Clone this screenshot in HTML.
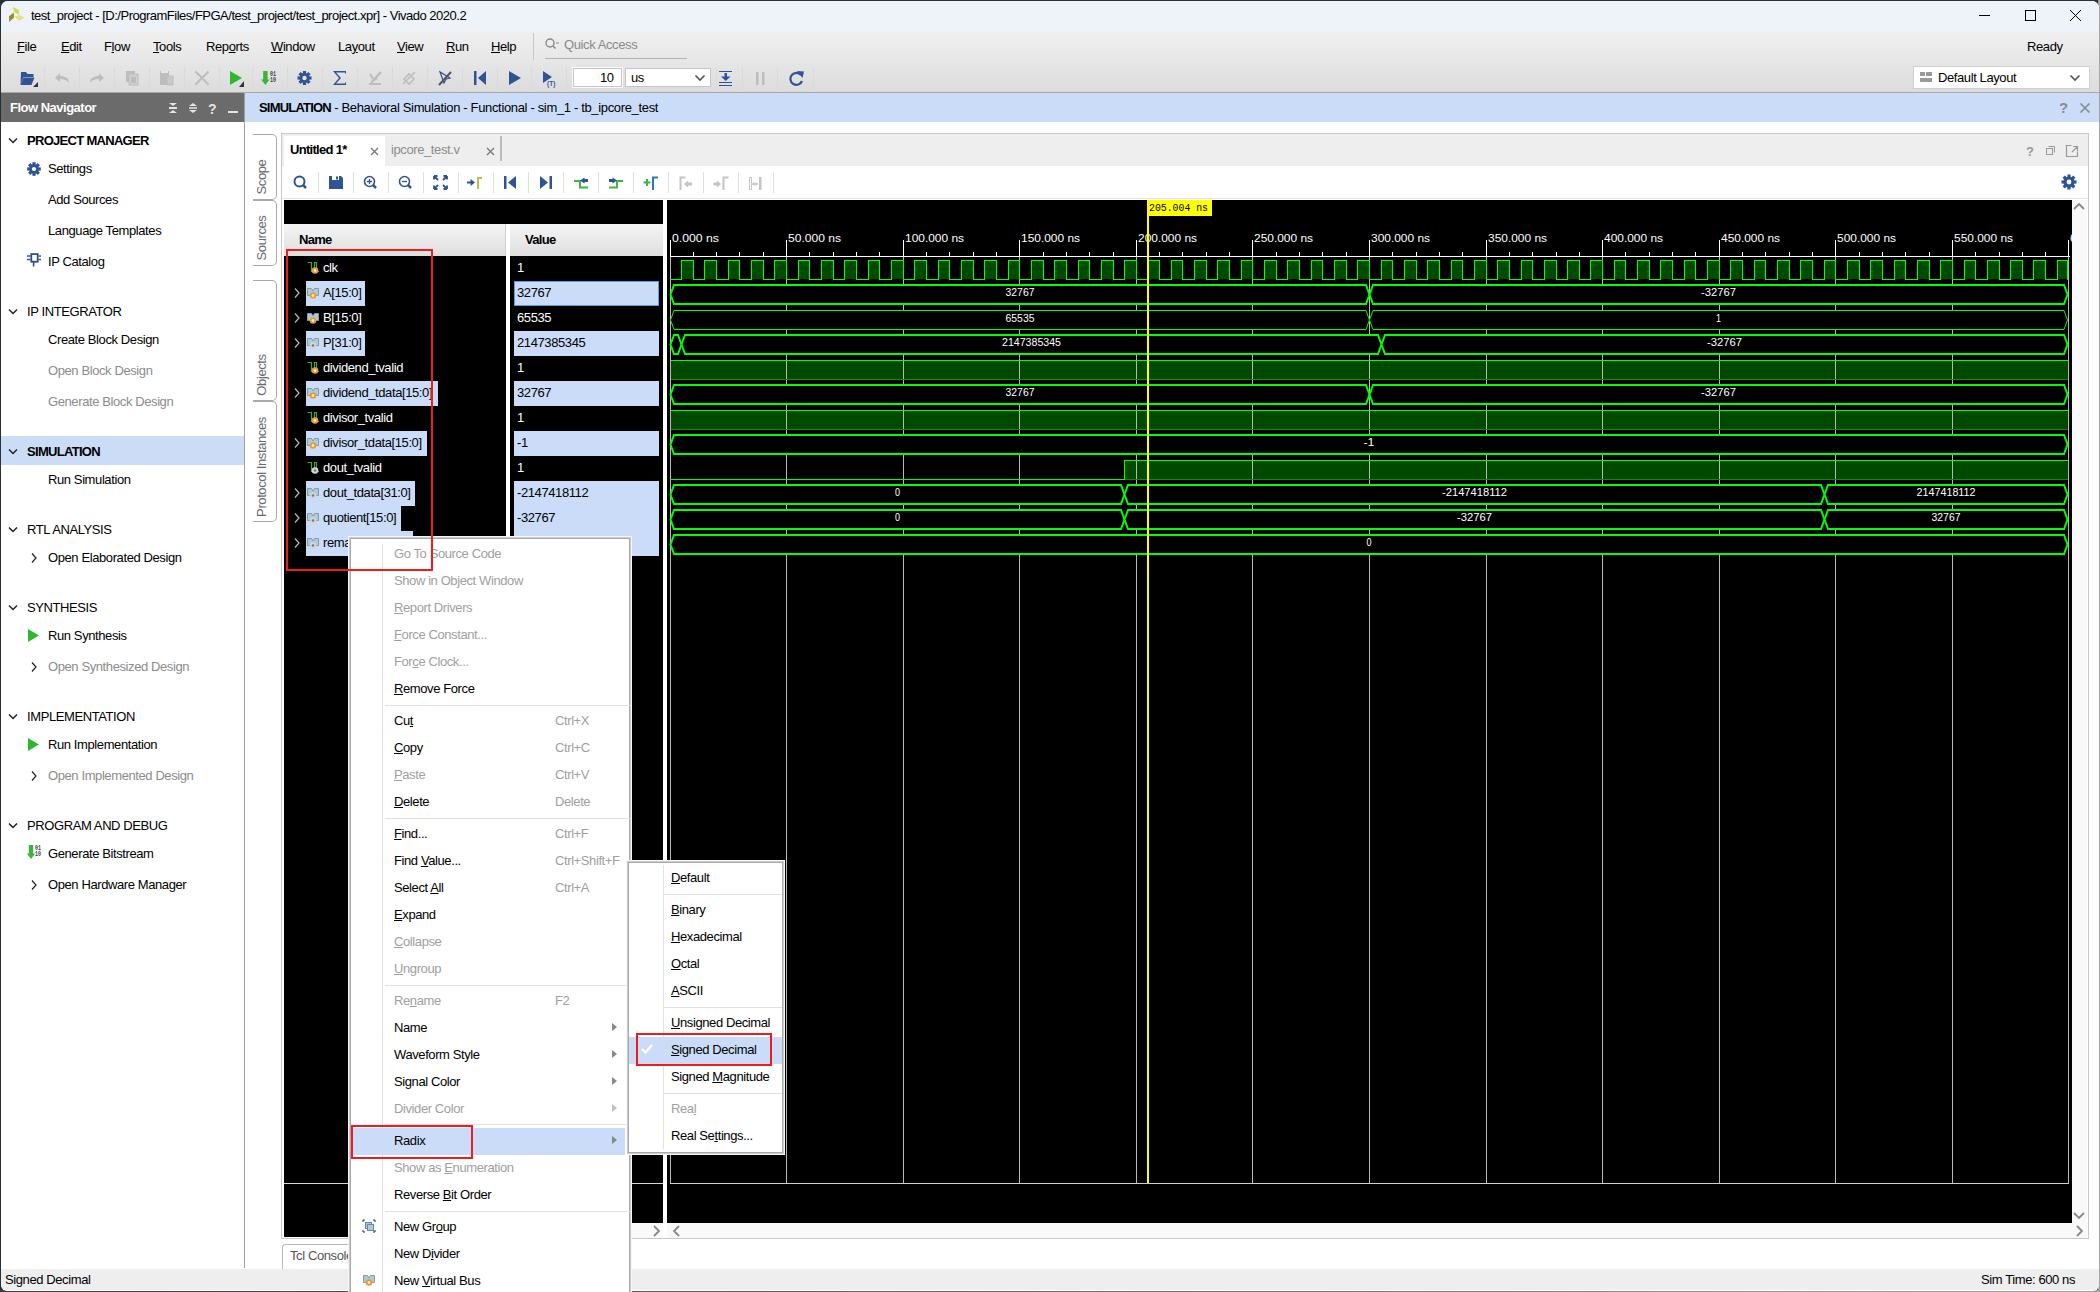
<!DOCTYPE html><html><head><meta charset="utf-8"><style>
*{margin:0;padding:0;box-sizing:border-box}
html,body{width:2100px;height:1292px;overflow:hidden;background:#2b3036;font-family:"Liberation Sans",sans-serif}
.t{position:absolute;white-space:nowrap;line-height:20px;letter-spacing:-0.4px;font-family:"Liberation Sans",sans-serif}
.r{position:absolute}
.s{position:absolute;overflow:visible}
u{text-decoration:underline;text-underline-offset:1px;text-decoration-thickness:1px}
b{letter-spacing:-0.8px}
.mono{font-family:"Liberation Mono",monospace}
</style></head><body>
<div class="r" style="left:2098px;top:0px;width:2px;height:1292px;background:#a4a4a4;"></div>
<div class="r" style="left:0px;top:1290px;width:2100px;height:2px;background:linear-gradient(90deg,#3a3f45,#6a6a6a 50%,#a4a4a4);"></div>
<div class="r" style="left:1px;top:1px;width:2098px;height:1290px;background:#ffffff;border-radius:7px 7px 6px 6px;overflow:hidden"></div>
<div class="r" style="left:1px;top:1px;width:2098px;height:30px;background:#eef2f9;border-radius:7px 7px 0 0"></div>
<div class="r" style="left:1px;top:31px;width:2098px;height:62px;background:linear-gradient(#f0f0f0,#dcdcdc);"></div>
<div class="r" style="left:1px;top:92px;width:2098px;height:1px;background:#a8a8a8;"></div>
<svg class="s" style="left:0;top:0" width="30" height="30"><polygon points="9,16.2 13.8,12.4 14,17.6 9.3,22" fill="#8f9418"/><polygon points="13,7 18.8,10 19,14.5 14,12" fill="#d6d84a"/><polygon points="14.3,17 19,15 24.5,17.6 19.5,20.7" fill="#e2e47a"/></svg>
<div class="t " style="left:31px;top:6px;font-size:13px;color:#000;font-weight:normal;letter-spacing:-0.5px">test_project - [D:/ProgramFiles/FPGA/test_project/test_project.xpr] - Vivado 2020.2</div>
<svg class="s" style="left:1975px;top:6px" width="110" height="20"><line x1="4" y1="9.5" x2="15" y2="9.5" stroke="#000" stroke-width="1"/><rect x="50.5" y="4.5" width="10" height="10" fill="none" stroke="#000" stroke-width="1"/><path d="M95,4 L106,15 M106,4 L95,15" stroke="#000" stroke-width="1"/></svg>
<div class="t " style="left:17px;top:37px;font-size:13px;color:#000;font-weight:normal;"><u>F</u>ile</div>
<div class="t " style="left:61px;top:37px;font-size:13px;color:#000;font-weight:normal;"><u>E</u>dit</div>
<div class="t " style="left:104px;top:37px;font-size:13px;color:#000;font-weight:normal;">F<u>l</u>ow</div>
<div class="t " style="left:153px;top:37px;font-size:13px;color:#000;font-weight:normal;"><u>T</u>ools</div>
<div class="t " style="left:206px;top:37px;font-size:13px;color:#000;font-weight:normal;">Rep<u>o</u>rts</div>
<div class="t " style="left:271px;top:37px;font-size:13px;color:#000;font-weight:normal;"><u>W</u>indow</div>
<div class="t " style="left:338px;top:37px;font-size:13px;color:#000;font-weight:normal;">La<u>y</u>out</div>
<div class="t " style="left:397px;top:37px;font-size:13px;color:#000;font-weight:normal;"><u>V</u>iew</div>
<div class="t " style="left:446px;top:37px;font-size:13px;color:#000;font-weight:normal;"><u>R</u>un</div>
<div class="t " style="left:491px;top:37px;font-size:13px;color:#000;font-weight:normal;"><u>H</u>elp</div>
<div class="r" style="left:533px;top:33px;width:1px;height:27px;background:#c8c8c8;"></div>
<svg class="s" style="left:544px;top:37px" width="18" height="14"><circle cx="6" cy="6" r="4" fill="none" stroke="#8a8a8a" stroke-width="1.4"/><line x1="9" y1="9" x2="11.5" y2="11.5" stroke="#8a8a8a" stroke-width="1.6"/><line x1="12" y1="6" x2="15" y2="6" stroke="#8a8a8a" stroke-width="1"/></svg>
<div class="t " style="left:564px;top:35px;font-size:13px;color:#8a8a8a;font-weight:normal;">Quick Access</div>
<div class="r" style="left:545px;top:58px;width:142px;height:1px;background:#b4b4b4;"></div>
<div class="t " style="left:2027px;top:37px;font-size:13px;color:#000;font-weight:normal;">Ready</div>
<svg class="s" style="left:0;top:62px" width="900" height="31" viewBox="0 62 900 31"><line x1="44.5" y1="67" x2="44.5" y2="89" stroke="#dadada" stroke-width="1"/><line x1="79.5" y1="67" x2="79.5" y2="89" stroke="#dadada" stroke-width="1"/><line x1="114.5" y1="67" x2="114.5" y2="89" stroke="#dadada" stroke-width="1"/><line x1="149.5" y1="67" x2="149.5" y2="89" stroke="#dadada" stroke-width="1"/><line x1="184.5" y1="67" x2="184.5" y2="89" stroke="#dadada" stroke-width="1"/><line x1="219.5" y1="67" x2="219.5" y2="89" stroke="#dadada" stroke-width="1"/><line x1="252.5" y1="67" x2="252.5" y2="89" stroke="#dadada" stroke-width="1"/><line x1="287.5" y1="67" x2="287.5" y2="89" stroke="#dadada" stroke-width="1"/><line x1="322.5" y1="67" x2="322.5" y2="89" stroke="#dadada" stroke-width="1"/><line x1="357.5" y1="67" x2="357.5" y2="89" stroke="#dadada" stroke-width="1"/><line x1="392.5" y1="67" x2="392.5" y2="89" stroke="#dadada" stroke-width="1"/><line x1="427.5" y1="67" x2="427.5" y2="89" stroke="#dadada" stroke-width="1"/><line x1="462.5" y1="67" x2="462.5" y2="89" stroke="#dadada" stroke-width="1"/><line x1="497.5" y1="67" x2="497.5" y2="89" stroke="#dadada" stroke-width="1"/><line x1="531.5" y1="67" x2="531.5" y2="89" stroke="#dadada" stroke-width="1"/><line x1="566.5" y1="67" x2="566.5" y2="89" stroke="#dadada" stroke-width="1"/><line x1="716.5" y1="67" x2="716.5" y2="89" stroke="#dadada" stroke-width="1"/><line x1="742.5" y1="67" x2="742.5" y2="89" stroke="#dadada" stroke-width="1"/><line x1="777.5" y1="67" x2="777.5" y2="89" stroke="#dadada" stroke-width="1"/><line x1="813.5" y1="67" x2="813.5" y2="89" stroke="#dadada" stroke-width="1"/><path d="M21,72 h5 l1.5,2 h6 v3 h-10 l-3,8 z" fill="#2f5496"/><path d="M23.5,77.5 h11 l-3,7.5 h-11 z" fill="#2f5496"/><polygon points="38,82 38,87 33,87" fill="#333"/><path d="M55,78 l5,-5 v3 c5,0 9,2 9,7 c-2,-3 -5,-4 -9,-4 v3 z" fill="#bdbdbd"/><path d="M104,78 l-5,-5 v3 c-5,0 -9,2 -9,7 c2,-3 5,-4 9,-4 v3 z" fill="#bdbdbd"/><rect x="126" y="71" width="9" height="11" fill="#bdbdbd"/><rect x="129" y="74" width="9" height="11" fill="#cfcfcf" stroke="#bdbdbd" stroke-width="1"/><path d="M131,78h5M131,80h5M131,82h5" stroke="#aaa" stroke-width="1"/><rect x="160" y="71" width="9" height="14" fill="#bdbdbd"/><rect x="161" y="71" width="7" height="2" fill="#e8e8e8"/><rect x="167" y="76" width="6" height="9" fill="#c9c9c9" stroke="#bdbdbd"/><path d="M195.5,71.5 L208.5,84.5 M208.5,71.5 L195.5,84.5" stroke="#bdbdbd" stroke-width="2"/><polygon points="230,71 230,85 242,78" fill="#2eb82e"/><polygon points="244,81 244,87 239,87" fill="#333"/><rect x="263.2" y="71" width="4.4" height="9" fill="#3cb33c"/><polygon points="261.2,79.5 269.6,79.5 265.4,85" fill="#3cb33c"/><text x="270" y="76.3" font-size="7" font-weight="bold" font-family="Liberation Mono" fill="#444" textLength="6" lengthAdjust="spacingAndGlyphs">01</text><text x="270" y="82.3" font-size="7" font-weight="bold" font-family="Liberation Mono" fill="#444" textLength="6" lengthAdjust="spacingAndGlyphs">10</text><rect x="302.9" y="71.0" width="3.2" height="4" fill="#2f5496" transform="rotate(0 304.5 78)"/><rect x="302.9" y="71.0" width="3.2" height="4" fill="#2f5496" transform="rotate(45 304.5 78)"/><rect x="302.9" y="71.0" width="3.2" height="4" fill="#2f5496" transform="rotate(90 304.5 78)"/><rect x="302.9" y="71.0" width="3.2" height="4" fill="#2f5496" transform="rotate(135 304.5 78)"/><rect x="302.9" y="71.0" width="3.2" height="4" fill="#2f5496" transform="rotate(180 304.5 78)"/><rect x="302.9" y="71.0" width="3.2" height="4" fill="#2f5496" transform="rotate(225 304.5 78)"/><rect x="302.9" y="71.0" width="3.2" height="4" fill="#2f5496" transform="rotate(270 304.5 78)"/><rect x="302.9" y="71.0" width="3.2" height="4" fill="#2f5496" transform="rotate(315 304.5 78)"/><circle cx="304.5" cy="78" r="5.0" fill="#2f5496"/><circle cx="304.5" cy="78" r="2.2" fill="#e4e4e4"/><path d="M333,71 h13 v2.5 h-1 v-1 h-9 l5,5.5 l-5,5.5 h9 v-1 h1 v2.5 h-13 l6,-7 z" fill="#2f5496"/><path d="M369,84 h12 M371,83 l10,-11 M370,74 l4,6 l3,-2" stroke="#bdbdbd" stroke-width="2.2" fill="none"/><path d="M403,84 l12,-12 M404,79 l5,-5 l5,5 l-5,5 z" stroke="#bdbdbd" stroke-width="1.6" fill="none"/><path d="M440,72 l4,11 l2,-4 l4,-1 z" fill="none" stroke="#2f5496" stroke-width="1.2"/><line x1="439" y1="85" x2="451" y2="72" stroke="#555" stroke-width="2"/><rect x="474" y="71" width="2.5" height="14" fill="#2f5496"/><polygon points="486,71 486,85 478,78" fill="#2f5496"/><polygon points="509,71 509,85 521,78" fill="#2f5496"/><polygon points="543,71 543,83 552,77" fill="#2f5496"/><text x="547" y="86" font-size="6.5" font-family="Liberation Sans" font-weight="bold" fill="#2f5496">(T)</text><path d="M719,71.5h13M719,82.5h13M719,85.5h13" stroke="#2f5496" stroke-width="1.2"/><rect x="724.5" y="73" width="2.5" height="4" fill="#2f5496"/><polygon points="721,76.5 730.5,76.5 725.75,81" fill="#2f5496"/><rect x="756" y="72" width="2.5" height="13" fill="#bdbdbd"/><rect x="762" y="72" width="2.5" height="13" fill="#bdbdbd"/><path d="M801,75 a6,6 0 1 0 1,6" fill="none" stroke="#2f5496" stroke-width="2.2"/><polygon points="797,71 804,71.5 802.5,78" fill="#2f5496"/></svg>
<div class="r" style="left:573px;top:68px;width:49px;height:19px;background:#fff;border:1px solid #c5c5c5;box-shadow:0 0 0 1px #fafafa"></div>
<div class="t " style="left:600px;top:68px;font-size:13px;color:#000;font-weight:normal;">10</div>
<div class="r" style="left:625px;top:68px;width:86px;height:19px;background:#fff;border:1px solid #c5c5c5"></div>
<div class="t " style="left:631px;top:68px;font-size:13px;color:#000;font-weight:normal;">us</div>
<svg class="s" style="left:694px;top:73px" width="12" height="10"><path d="M1.5,2.5 L6,7 L10.5,2.5" fill="none" stroke="#555" stroke-width="1.6"/></svg>
<div class="r" style="left:1913px;top:66px;width:177px;height:23px;background:#fff;border:1px solid #d0d0d0"></div>
<svg class="s" style="left:1920px;top:72px" width="14" height="12"><rect x="0" y="0" width="5" height="4" fill="#999"/><rect x="6" y="0" width="6" height="4" fill="#999"/><rect x="0" y="6" width="12" height="4" fill="#999"/></svg>
<div class="t " style="left:1938px;top:68px;font-size:13px;color:#000;font-weight:normal;">Default Layout</div>
<svg class="s" style="left:2069px;top:73px" width="12" height="10"><path d="M1.5,2.5 L6,7 L10.5,2.5" fill="none" stroke="#555" stroke-width="1.6"/></svg>
<div class="r" style="left:1px;top:93px;width:243px;height:29px;background:#6b6b6b;"></div>
<div class="t " style="left:10px;top:98px;font-size:13px;color:#fff;font-weight:bold;letter-spacing:-0.7px;letter-spacing:-0.5px">Flow Navigator</div>
<svg class="s" style="left:165px;top:98px" width="80" height="20"><polygon points="4,5 12,5 8,8" fill="#e4e4e4"/><rect x="4" y="9" width="8" height="2" fill="#e4e4e4"/><polygon points="4,15 12,15 8,12" fill="#e4e4e4"/><polygon points="24,8 28,5 32,8" fill="#e4e4e4"/><rect x="24" y="9" width="8" height="2" fill="#c4c4c4"/><polygon points="24,12 32,12 28,15" fill="#e4e4e4"/><text x="43" y="15.5" font-size="14" font-weight="bold" font-family="Liberation Sans" fill="#e4e4e4">?</text><rect x="63" y="13" width="10" height="2" fill="#e4e4e4"/></svg>
<div class="r" style="left:244px;top:93px;width:1px;height:1175px;background:#a0a0a0;"></div>
<div class="r" style="left:1px;top:436px;width:243px;height:29px;background:#cbdcf7;"></div>
<svg class="s" style="left:7px;top:137px" width="12" height="8"><path d="M2,1.5 L6,5.5 L10,1.5" fill="none" stroke="#222" stroke-width="1.5"/></svg>
<div class="t " style="left:27px;top:131px;font-size:13px;color:#000;font-weight:bold;letter-spacing:-0.7px;">PROJECT MANAGER</div>
<svg class="s" style="left:7px;top:308px" width="12" height="8"><path d="M2,1.5 L6,5.5 L10,1.5" fill="none" stroke="#222" stroke-width="1.5"/></svg>
<div class="t " style="left:27px;top:302px;font-size:13px;color:#000;font-weight:normal;">IP INTEGRATOR</div>
<svg class="s" style="left:7px;top:448px" width="12" height="8"><path d="M2,1.5 L6,5.5 L10,1.5" fill="none" stroke="#222" stroke-width="1.5"/></svg>
<div class="t " style="left:27px;top:442px;font-size:13px;color:#000;font-weight:bold;letter-spacing:-0.7px;">SIMULATION</div>
<svg class="s" style="left:7px;top:526px" width="12" height="8"><path d="M2,1.5 L6,5.5 L10,1.5" fill="none" stroke="#222" stroke-width="1.5"/></svg>
<div class="t " style="left:27px;top:520px;font-size:13px;color:#000;font-weight:normal;">RTL ANALYSIS</div>
<svg class="s" style="left:7px;top:604px" width="12" height="8"><path d="M2,1.5 L6,5.5 L10,1.5" fill="none" stroke="#222" stroke-width="1.5"/></svg>
<div class="t " style="left:27px;top:598px;font-size:13px;color:#000;font-weight:normal;">SYNTHESIS</div>
<svg class="s" style="left:7px;top:713px" width="12" height="8"><path d="M2,1.5 L6,5.5 L10,1.5" fill="none" stroke="#222" stroke-width="1.5"/></svg>
<div class="t " style="left:27px;top:707px;font-size:13px;color:#000;font-weight:normal;">IMPLEMENTATION</div>
<svg class="s" style="left:7px;top:822px" width="12" height="8"><path d="M2,1.5 L6,5.5 L10,1.5" fill="none" stroke="#222" stroke-width="1.5"/></svg>
<div class="t " style="left:27px;top:816px;font-size:13px;color:#000;font-weight:normal;">PROGRAM AND DEBUG</div>
<div class="t " style="left:48px;top:159px;font-size:13px;color:#000;font-weight:normal;">Settings</div>
<svg class="s" style="left:26px;top:161px" width="16" height="16" viewBox="0 0 16 16"><rect x="6.4" y="1.2000000000000002" width="3.2" height="4" fill="#2f5496" transform="rotate(0 8 8)"/><rect x="6.4" y="1.2000000000000002" width="3.2" height="4" fill="#2f5496" transform="rotate(45 8 8)"/><rect x="6.4" y="1.2000000000000002" width="3.2" height="4" fill="#2f5496" transform="rotate(90 8 8)"/><rect x="6.4" y="1.2000000000000002" width="3.2" height="4" fill="#2f5496" transform="rotate(135 8 8)"/><rect x="6.4" y="1.2000000000000002" width="3.2" height="4" fill="#2f5496" transform="rotate(180 8 8)"/><rect x="6.4" y="1.2000000000000002" width="3.2" height="4" fill="#2f5496" transform="rotate(225 8 8)"/><rect x="6.4" y="1.2000000000000002" width="3.2" height="4" fill="#2f5496" transform="rotate(270 8 8)"/><rect x="6.4" y="1.2000000000000002" width="3.2" height="4" fill="#2f5496" transform="rotate(315 8 8)"/><circle cx="8" cy="8" r="4.8" fill="#2f5496"/><circle cx="8" cy="8" r="2.12" fill="#fff"/></svg>
<div class="t " style="left:48px;top:190px;font-size:13px;color:#000;font-weight:normal;">Add Sources</div>
<div class="t " style="left:48px;top:221px;font-size:13px;color:#000;font-weight:normal;">Language Templates</div>
<div class="t " style="left:48px;top:252px;font-size:13px;color:#000;font-weight:normal;">IP Catalog</div>
<svg class="s" style="left:20px;top:250px" width="30" height="20"><rect x="11.3" y="4.1" width="6.4" height="7.6" stroke="#2f4f8a" stroke-width="1.8" fill="none"/><path d="M7,6 H10.5 M7,9.5 H10.5 M18.5,6 H21 M18.5,9.5 H21" stroke="#3a5a94" stroke-width="1.3"/><path d="M13.6,12 V16.5" stroke="#2f4f8a" stroke-width="1.6"/></svg>
<div class="t " style="left:48px;top:330px;font-size:13px;color:#000;font-weight:normal;">Create Block Design</div>
<div class="t " style="left:48px;top:361px;font-size:13px;color:#8c8c8c;font-weight:normal;">Open Block Design</div>
<div class="t " style="left:48px;top:392px;font-size:13px;color:#8c8c8c;font-weight:normal;">Generate Block Design</div>
<div class="t " style="left:48px;top:470px;font-size:13px;color:#000;font-weight:normal;">Run Simulation</div>
<div class="t " style="left:48px;top:548px;font-size:13px;color:#000;font-weight:normal;">Open Elaborated Design</div>
<svg class="s" style="left:30px;top:552px" width="8" height="12"><path d="M2,1.5 L6,6 L2,10.5" fill="none" stroke="#222" stroke-width="1.2"/></svg>
<div class="t " style="left:48px;top:626px;font-size:13px;color:#000;font-weight:normal;">Run Synthesis</div>
<svg class="s" style="left:27px;top:628px" width="14" height="16"><polygon points="1,1 1,14 12,7.5" fill="#2eb82e"/></svg>
<div class="t " style="left:48px;top:657px;font-size:13px;color:#8c8c8c;font-weight:normal;">Open Synthesized Design</div>
<svg class="s" style="left:30px;top:661px" width="8" height="12"><path d="M2,1.5 L6,6 L2,10.5" fill="none" stroke="#222" stroke-width="1.2"/></svg>
<div class="t " style="left:48px;top:735px;font-size:13px;color:#000;font-weight:normal;">Run Implementation</div>
<svg class="s" style="left:27px;top:737px" width="14" height="16"><polygon points="1,1 1,14 12,7.5" fill="#2eb82e"/></svg>
<div class="t " style="left:48px;top:766px;font-size:13px;color:#8c8c8c;font-weight:normal;">Open Implemented Design</div>
<svg class="s" style="left:30px;top:770px" width="8" height="12"><path d="M2,1.5 L6,6 L2,10.5" fill="none" stroke="#222" stroke-width="1.2"/></svg>
<div class="t " style="left:48px;top:844px;font-size:13px;color:#000;font-weight:normal;">Generate Bitstream</div>
<svg class="s" style="left:20px;top:840px" width="30" height="25"><rect x="8.8" y="5" width="4.4" height="9" fill="#3cb33c"/><polygon points="6.8,13.5 15.2,13.5 11,19" fill="#3cb33c"/><text x="15" y="10.3" font-size="7" font-weight="bold" font-family="Liberation Mono" fill="#444" textLength="6" lengthAdjust="spacingAndGlyphs">01</text><text x="15" y="16.3" font-size="7" font-weight="bold" font-family="Liberation Mono" fill="#444" textLength="6" lengthAdjust="spacingAndGlyphs">10</text></svg>
<div class="t " style="left:48px;top:875px;font-size:13px;color:#000;font-weight:normal;">Open Hardware Manager</div>
<svg class="s" style="left:30px;top:879px" width="8" height="12"><path d="M2,1.5 L6,6 L2,10.5" fill="none" stroke="#222" stroke-width="1.2"/></svg>
<div class="r" style="left:1px;top:1269px;width:2098px;height:21px;background:#eeeeee;border-radius:0 0 6px 6px"></div>
<div class="t " style="left:5px;top:1270px;font-size:13px;color:#000;font-weight:normal;">Signed Decimal</div>
<div class="t " style="left:1981px;top:1270px;font-size:13px;color:#000;font-weight:normal;">Sim Time: 600 ns</div>
<div class="r" style="left:245px;top:93px;width:1854px;height:29px;background:#cadcf8;"></div>
<div class="t " style="left:259px;top:98px;font-size:13px;color:#000;font-weight:normal;letter-spacing:-0.34px"><b>SIMULATION</b> - Behavioral Simulation - Functional - sim_1 - tb_ipcore_test</div>
<svg class="s" style="left:2055px;top:98px" width="40" height="20"><text x="4" y="15" font-size="15" font-weight="bold" font-family="Liberation Sans" fill="#8a8a8a">?</text><path d="M25.5,5.5 L34.5,14.5 M34.5,5.5 L25.5,14.5" stroke="#8a8a8a" stroke-width="1.6"/></svg>
<div class="r" style="left:253px;top:134px;width:24px;height:66px;border:1px solid #a9a9a9;border-left:none;border-radius:0 5px 5px 0;background:#fff"></div><div class="t" style="left:162px;top:167.0px;width:200px;height:20px;font-size:13px;color:#6a6a6a;transform:rotate(-90deg);text-align:center">Scope</div>
<div class="r" style="left:253px;top:200px;width:24px;height:66px;border:1px solid #a9a9a9;border-left:none;border-radius:0 5px 5px 0;background:#fff"></div><div class="t" style="left:162px;top:227.5px;width:200px;height:20px;font-size:13px;color:#6a6a6a;transform:rotate(-90deg);text-align:center">Sources</div>
<div class="r" style="left:253px;top:280px;width:24px;height:121px;border:1px solid #a9a9a9;border-left:none;border-radius:0 5px 5px 0;background:#fff"></div><div class="t" style="left:162px;top:365.0px;width:200px;height:20px;font-size:13px;color:#6a6a6a;transform:rotate(-90deg);text-align:center">Objects</div>
<div class="r" style="left:253px;top:401px;width:24px;height:121px;border:1px solid #a9a9a9;border-left:none;border-radius:0 5px 5px 0;background:#fff"></div><div class="t" style="left:162px;top:456.5px;width:200px;height:20px;font-size:13px;color:#6a6a6a;transform:rotate(-90deg);text-align:center">Protocol Instances</div>
<div class="r" style="left:281px;top:133px;width:1808px;height:1106px;background:#fff;border:1px solid #c8c8c8"></div>
<div class="r" style="left:282px;top:134px;width:1806px;height:32px;background:#eeeeee;"></div>
<div class="r" style="left:284px;top:136px;width:101px;height:30px;background:#ffffff;"></div>
<div class="t " style="left:290px;top:140px;font-size:13px;color:#000;font-weight:bold;letter-spacing:-0.7px;">Untitled 1*</div>
<svg class="s" style="left:369px;top:146px" width="12" height="12"><path d="M2,2 L9,9 M9,2 L2,9" stroke="#777" stroke-width="1.3"/></svg>
<div class="t " style="left:391px;top:140px;font-size:13px;color:#8c8c8c;font-weight:normal;">ipcore_test.v</div>
<svg class="s" style="left:485px;top:146px" width="12" height="12"><path d="M2,2 L9,9 M9,2 L2,9" stroke="#777" stroke-width="1.3"/></svg>
<div class="r" style="left:500px;top:136px;width:2px;height:25px;background:#bcbcbc;"></div>
<svg class="s" style="left:2020px;top:142px" width="64" height="18"><text x="6" y="14" font-size="13" font-weight="bold" font-family="Liberation Sans" fill="#999">?</text><rect x="26.5" y="6.5" width="6" height="6" fill="none" stroke="#999"/><path d="M28.5,4.5 h6 v6" fill="none" stroke="#999"/><path d="M51.5,3.5 h-5 v11 h11 v-5 M52,10 l5,-5 M53,4.5 h4.5 v4.5" fill="none" stroke="#999" stroke-width="1.2"/></svg>
<svg class="s" style="left:280px;top:167px" width="500" height="32" viewBox="280 166 500 32"><line x1="318.5" y1="171" x2="318.5" y2="192" stroke="#e0e0e0"/><line x1="353.5" y1="171" x2="353.5" y2="192" stroke="#e0e0e0"/><line x1="388.5" y1="171" x2="388.5" y2="192" stroke="#e0e0e0"/><line x1="423.5" y1="171" x2="423.5" y2="192" stroke="#e0e0e0"/><line x1="458.5" y1="171" x2="458.5" y2="192" stroke="#e0e0e0"/><line x1="493.5" y1="171" x2="493.5" y2="192" stroke="#e0e0e0"/><line x1="528.5" y1="171" x2="528.5" y2="192" stroke="#e0e0e0"/><line x1="563.5" y1="171" x2="563.5" y2="192" stroke="#e0e0e0"/><line x1="598.5" y1="171" x2="598.5" y2="192" stroke="#e0e0e0"/><line x1="633.5" y1="171" x2="633.5" y2="192" stroke="#e0e0e0"/><line x1="668.5" y1="171" x2="668.5" y2="192" stroke="#e0e0e0"/><line x1="703.5" y1="171" x2="703.5" y2="192" stroke="#e0e0e0"/><line x1="738.5" y1="171" x2="738.5" y2="192" stroke="#e0e0e0"/><line x1="773.5" y1="171" x2="773.5" y2="192" stroke="#e0e0e0"/><circle cx="299.5" cy="180.5" r="5" fill="none" stroke="#2f5496" stroke-width="2"/><line x1="303" y1="184" x2="306" y2="187" stroke="#2f5496" stroke-width="2.5"/><path d="M329,175 h12 l2,2 v11 h-14 z" fill="#2f5496"/><rect x="332" y="175" width="7" height="4" fill="#fff"/><rect x="336" y="175.5" width="2" height="3" fill="#2f5496"/><circle cx="369.5" cy="180.5" r="5" fill="none" stroke="#2f5496" stroke-width="1.6"/><line x1="373" y1="184" x2="376" y2="187" stroke="#2f5496" stroke-width="2.5"/><path d="M367,180.5 h5 M369.5,178 v5" stroke="#2f5496" stroke-width="1.3"/><circle cx="404.5" cy="180.5" r="5" fill="none" stroke="#2f5496" stroke-width="1.6"/><line x1="408" y1="184" x2="411" y2="187" stroke="#2f5496" stroke-width="2.5"/><path d="M402,180.5 h5" stroke="#2f5496" stroke-width="1.3"/><path d="M434,175 l4,4 M434,175 v3.5 M434,175 h3.5 M447,175 l-4,4 M447,175 v3.5 M447,175 h-3.5 M434,188 l4,-4 M434,188 v-3.5 M434,188 h3.5 M447,188 l-4,-4 M447,188 v-3.5 M447,188 h-3.5" stroke="#2f5496" stroke-width="1.8" fill="none"/><polygon points="475,181.5 470.5,178 470.5,185" fill="#2f5496"/><rect x="467" y="180.5" width="4" height="2" fill="#2f5496"/><path d="M478,188 v-11 h4" stroke="#d4b44a" stroke-width="2" fill="none"/><rect x="504" y="175" width="2.5" height="13" fill="#2f5496"/><polygon points="516,175 516,188 508,181.5" fill="#2f5496"/><polygon points="540,175 540,188 548,181.5" fill="#2f5496"/><rect x="549.5" y="175" width="2.5" height="13" fill="#2f5496"/><path d="M574,180 H580 V186.5 H588" stroke="#3cb83c" stroke-width="2" fill="none"/><polygon points="580,179.5 584.5,176.5 584.5,182.5" fill="#2f5496"/><rect x="584" y="178" width="4" height="3" fill="#2f5496"/><path d="M609,186.5 H617 V180 H623" stroke="#3cb83c" stroke-width="2" fill="none"/><polygon points="617,179.5 612.5,176.5 612.5,182.5" fill="#2f5496"/><rect x="609" y="178" width="4" height="3" fill="#2f5496"/><path d="M643.5,181.5 h7 M647,178 v7" stroke="#3cb83c" stroke-width="2"/><path d="M653,189 v-12.5 h5" stroke="#2a78b8" stroke-width="2" fill="none"/><path d="M680.5,189 v-12.5 h5" stroke="#c4c4c4" stroke-width="2" fill="none"/><polygon points="684,183 688,179.5 688,186.5" fill="#c4c4c4"/><rect x="687.5" y="181.5" width="4.5" height="3" fill="#c4c4c4"/><path d="M723.5,189 v-12.5 h5" stroke="#c4c4c4" stroke-width="2" fill="none"/><polygon points="721,183 717,179.5 717,186.5" fill="#c4c4c4"/><rect x="713.5" y="181.5" width="4" height="3" fill="#c4c4c4"/><rect x="749.5" y="176.5" width="2" height="12" fill="none" stroke="#c8c8c8"/><rect x="759" y="176" width="2.5" height="13" fill="#c4c4c4"/><path d="M752,183 h6" stroke="#c4c4c4" stroke-width="1"/><polygon points="752,183 754.5,181 754.5,185" fill="#c4c4c4"/><polygon points="758,183 755.5,181 755.5,185" fill="#c4c4c4"/></svg>
<svg class="s" style="left:2060px;top:173px" width="18" height="18" viewBox="0 0 18 18"><rect x="7.4" y="1.5" width="3.2" height="4" fill="#2f5496" transform="rotate(0 9 9)"/><rect x="7.4" y="1.5" width="3.2" height="4" fill="#2f5496" transform="rotate(45 9 9)"/><rect x="7.4" y="1.5" width="3.2" height="4" fill="#2f5496" transform="rotate(90 9 9)"/><rect x="7.4" y="1.5" width="3.2" height="4" fill="#2f5496" transform="rotate(135 9 9)"/><rect x="7.4" y="1.5" width="3.2" height="4" fill="#2f5496" transform="rotate(180 9 9)"/><rect x="7.4" y="1.5" width="3.2" height="4" fill="#2f5496" transform="rotate(225 9 9)"/><rect x="7.4" y="1.5" width="3.2" height="4" fill="#2f5496" transform="rotate(270 9 9)"/><rect x="7.4" y="1.5" width="3.2" height="4" fill="#2f5496" transform="rotate(315 9 9)"/><circle cx="9" cy="9" r="5.5" fill="#2f5496"/><circle cx="9" cy="9" r="2.4000000000000004" fill="#fff"/></svg>
<div class="r" style="left:284px;top:200px;width:1788px;height:1023px;background:#000;"></div>
<div class="r" style="left:284px;top:1223px;width:222px;height:14px;background:#000;"></div>
<div class="r" style="left:506px;top:224px;width:4px;height:1013px;background:#fff;"></div>
<div class="r" style="left:663px;top:200px;width:4px;height:1038px;background:#fff;"></div>
<div class="r" style="left:282px;top:198px;width:1806px;height:1px;background:#e4e4e4;"></div>
<div class="r" style="left:284px;top:224px;width:222px;height:32px;background:linear-gradient(#f5f5f5,#dedede);"></div>
<div class="r" style="left:510px;top:224px;width:153px;height:32px;background:linear-gradient(#f5f5f5,#dedede);"></div>
<div class="r" style="left:505px;top:224px;width:1px;height:32px;background:#cfcfcf;"></div>
<div class="t " style="left:299px;top:230px;font-size:13px;color:#000;font-weight:bold;letter-spacing:-0.7px;">Name</div>
<div class="t " style="left:525px;top:230px;font-size:13px;color:#000;font-weight:bold;letter-spacing:-0.7px;">Value</div>
<div class="r" style="left:284px;top:1183px;width:222px;height:1px;background:#d8d8d8;"></div>
<div class="r" style="left:510px;top:1183px;width:153px;height:1px;background:#d8d8d8;"></div>
<div class="r" style="left:667px;top:1223px;width:1405px;height:15px;background:#f9f9f9;"></div>
<div class="r" style="left:510px;top:1223px;width:153px;height:15px;background:#f9f9f9;"></div>
<div class="r" style="left:2072px;top:200px;width:15px;height:1038px;background:#f9f9f9;"></div>
<svg class="s" style="left:2071px;top:201px" width="16" height="12"><path d="M3,8 L8,3 L13,8" fill="none" stroke="#888" stroke-width="1.8"/></svg>
<svg class="s" style="left:2071px;top:1210px" width="16" height="12"><path d="M3,3 L8,8 L13,3" fill="none" stroke="#888" stroke-width="1.8"/></svg>
<svg class="s" style="left:2073px;top:1223px" width="14" height="16"><path d="M4,3 L9,8 L4,13" fill="none" stroke="#888" stroke-width="1.8"/></svg>
<svg class="s" style="left:650px;top:1223px" width="14" height="16"><path d="M4,3 L9,8 L4,13" fill="none" stroke="#888" stroke-width="1.8"/></svg>
<svg class="s" style="left:669px;top:1223px" width="14" height="16"><path d="M10,3 L5,8 L10,13" fill="none" stroke="#888" stroke-width="1.8"/></svg>
<div class="r" style="left:282px;top:1244px;width:75px;height:25px;background:#fff;border:1px solid #b8b8b8;border-bottom:none;border-radius:4px 4px 0 0"></div>
<div class="t " style="left:290px;top:1246px;font-size:13px;color:#555;font-weight:normal;">Tcl Console</div>
<div class="t " style="left:323px;top:258px;font-size:13px;color:#fff;font-weight:normal;">clk</div>
<div class="t " style="left:517px;top:258px;font-size:13px;color:#fff;font-weight:normal;">1</div>
<svg class="s" style="left:306px;top:260px" width="16" height="17"><path d="M1.5,2.5 H5.5 V11.5 H8.5 V2.5 H10.5 V11.5 H13" fill="none" stroke="#3aa83a" stroke-width="1.2"/><circle cx="9" cy="10.5" r="3.3" fill="#f39a2b"/><circle cx="9" cy="10.5" r="1.2" fill="#fff"/></svg>
<div class="r" style="left:306px;top:281px;width:59px;height:25px;background:#cadcf8;"></div>
<div class="r" style="left:514px;top:281px;width:145px;height:25px;background:#cadcf8;"></div>
<svg class="s" style="left:293px;top:287px" width="8" height="12"><path d="M2,1.5 L6,6 L2,10.5" fill="none" stroke="#bbb" stroke-width="1.2"/></svg>
<div class="t " style="left:323px;top:283px;font-size:13px;color:#000;font-weight:normal;">A[15:0]</div>
<div class="t " style="left:517px;top:283px;font-size:13px;color:#000;font-weight:normal;">32767</div>
<svg class="s" style="left:306px;top:286px" width="16" height="16"><polygon points="1.5,2.5 5.5,2.5 7,5 8.5,2.5 12.5,2.5 12.5,9.5 1.5,9.5" fill="#a7cce0" stroke="#8a9aa4" stroke-width="1"/><circle cx="7" cy="9.5" r="3.3" fill="#f39a2b"/><circle cx="7" cy="9.5" r="1.2" fill="#fff"/></svg>
<svg class="s" style="left:293px;top:312px" width="8" height="12"><path d="M2,1.5 L6,6 L2,10.5" fill="none" stroke="#bbb" stroke-width="1.2"/></svg>
<div class="t " style="left:323px;top:308px;font-size:13px;color:#fff;font-weight:normal;">B[15:0]</div>
<div class="t " style="left:517px;top:308px;font-size:13px;color:#fff;font-weight:normal;">65535</div>
<svg class="s" style="left:306px;top:311px" width="16" height="16"><polygon points="1.5,2.5 5.5,2.5 7,5 8.5,2.5 12.5,2.5 12.5,9.5 1.5,9.5" fill="#a7cce0" stroke="#8a9aa4" stroke-width="1"/><circle cx="7" cy="9.5" r="3.3" fill="#f39a2b"/><circle cx="7" cy="9.5" r="1.2" fill="#fff"/></svg>
<div class="r" style="left:306px;top:331px;width:59px;height:25px;background:#cadcf8;"></div>
<div class="r" style="left:514px;top:331px;width:145px;height:25px;background:#cadcf8;"></div>
<svg class="s" style="left:293px;top:337px" width="8" height="12"><path d="M2,1.5 L6,6 L2,10.5" fill="none" stroke="#bbb" stroke-width="1.2"/></svg>
<div class="t " style="left:323px;top:333px;font-size:13px;color:#000;font-weight:normal;">P[31:0]</div>
<div class="t " style="left:517px;top:333px;font-size:13px;color:#000;font-weight:normal;">2147385345</div>
<svg class="s" style="left:306px;top:336px" width="16" height="16"><polygon points="1.5,2.5 5.5,2.5 7,5 8.5,2.5 12.5,2.5 12.5,9.5 1.5,9.5" fill="#a7cce0" stroke="#8a9aa4" stroke-width="1"/><circle cx="7" cy="9.5" r="3.3" fill="#d4d4d4"/><circle cx="7" cy="9.5" r="1.2" fill="#777"/></svg>
<div class="t " style="left:323px;top:358px;font-size:13px;color:#fff;font-weight:normal;">dividend_tvalid</div>
<div class="t " style="left:517px;top:358px;font-size:13px;color:#fff;font-weight:normal;">1</div>
<svg class="s" style="left:306px;top:360px" width="16" height="17"><path d="M1.5,2.5 H5.5 V11.5 H8.5 V2.5 H10.5 V11.5 H13" fill="none" stroke="#3aa83a" stroke-width="1.2"/><circle cx="9" cy="10.5" r="3.3" fill="#f39a2b"/><circle cx="9" cy="10.5" r="1.2" fill="#fff"/></svg>
<div class="r" style="left:306px;top:381px;width:132px;height:25px;background:#cadcf8;"></div>
<div class="r" style="left:514px;top:381px;width:145px;height:25px;background:#cadcf8;"></div>
<svg class="s" style="left:293px;top:387px" width="8" height="12"><path d="M2,1.5 L6,6 L2,10.5" fill="none" stroke="#bbb" stroke-width="1.2"/></svg>
<div class="t " style="left:323px;top:383px;font-size:13px;color:#000;font-weight:normal;">dividend_tdata[15:0]</div>
<div class="t " style="left:517px;top:383px;font-size:13px;color:#000;font-weight:normal;">32767</div>
<svg class="s" style="left:306px;top:386px" width="16" height="16"><polygon points="1.5,2.5 5.5,2.5 7,5 8.5,2.5 12.5,2.5 12.5,9.5 1.5,9.5" fill="#a7cce0" stroke="#8a9aa4" stroke-width="1"/><circle cx="7" cy="9.5" r="3.3" fill="#f39a2b"/><circle cx="7" cy="9.5" r="1.2" fill="#fff"/></svg>
<div class="t " style="left:323px;top:408px;font-size:13px;color:#fff;font-weight:normal;">divisor_tvalid</div>
<div class="t " style="left:517px;top:408px;font-size:13px;color:#fff;font-weight:normal;">1</div>
<svg class="s" style="left:306px;top:410px" width="16" height="17"><path d="M1.5,2.5 H5.5 V11.5 H8.5 V2.5 H10.5 V11.5 H13" fill="none" stroke="#3aa83a" stroke-width="1.2"/><circle cx="9" cy="10.5" r="3.3" fill="#f39a2b"/><circle cx="9" cy="10.5" r="1.2" fill="#fff"/></svg>
<div class="r" style="left:306px;top:431px;width:121px;height:25px;background:#cadcf8;"></div>
<div class="r" style="left:514px;top:431px;width:145px;height:25px;background:#cadcf8;"></div>
<svg class="s" style="left:293px;top:437px" width="8" height="12"><path d="M2,1.5 L6,6 L2,10.5" fill="none" stroke="#bbb" stroke-width="1.2"/></svg>
<div class="t " style="left:323px;top:433px;font-size:13px;color:#000;font-weight:normal;">divisor_tdata[15:0]</div>
<div class="t " style="left:517px;top:433px;font-size:13px;color:#000;font-weight:normal;">-1</div>
<svg class="s" style="left:306px;top:436px" width="16" height="16"><polygon points="1.5,2.5 5.5,2.5 7,5 8.5,2.5 12.5,2.5 12.5,9.5 1.5,9.5" fill="#a7cce0" stroke="#8a9aa4" stroke-width="1"/><circle cx="7" cy="9.5" r="3.3" fill="#f39a2b"/><circle cx="7" cy="9.5" r="1.2" fill="#fff"/></svg>
<div class="t " style="left:323px;top:458px;font-size:13px;color:#fff;font-weight:normal;">dout_tvalid</div>
<div class="t " style="left:517px;top:458px;font-size:13px;color:#fff;font-weight:normal;">1</div>
<svg class="s" style="left:306px;top:460px" width="16" height="17"><path d="M1.5,2.5 H5.5 V11.5 H8.5 V2.5 H10.5 V11.5 H13" fill="none" stroke="#3aa83a" stroke-width="1.2"/><circle cx="9" cy="10.5" r="3.3" fill="#d4d4d4"/><circle cx="9" cy="10.5" r="1.2" fill="#777"/></svg>
<div class="r" style="left:306px;top:481px;width:109px;height:25px;background:#cadcf8;"></div>
<div class="r" style="left:514px;top:481px;width:145px;height:25px;background:#cadcf8;"></div>
<svg class="s" style="left:293px;top:487px" width="8" height="12"><path d="M2,1.5 L6,6 L2,10.5" fill="none" stroke="#bbb" stroke-width="1.2"/></svg>
<div class="t " style="left:323px;top:483px;font-size:13px;color:#000;font-weight:normal;">dout_tdata[31:0]</div>
<div class="t " style="left:517px;top:483px;font-size:13px;color:#000;font-weight:normal;">-2147418112</div>
<svg class="s" style="left:306px;top:486px" width="16" height="16"><polygon points="1.5,2.5 5.5,2.5 7,5 8.5,2.5 12.5,2.5 12.5,9.5 1.5,9.5" fill="#a7cce0" stroke="#8a9aa4" stroke-width="1"/><circle cx="7" cy="9.5" r="3.3" fill="#d4d4d4"/><circle cx="7" cy="9.5" r="1.2" fill="#777"/></svg>
<div class="r" style="left:306px;top:506px;width:95px;height:25px;background:#cadcf8;"></div>
<div class="r" style="left:514px;top:506px;width:145px;height:25px;background:#cadcf8;"></div>
<svg class="s" style="left:293px;top:512px" width="8" height="12"><path d="M2,1.5 L6,6 L2,10.5" fill="none" stroke="#bbb" stroke-width="1.2"/></svg>
<div class="t " style="left:323px;top:508px;font-size:13px;color:#000;font-weight:normal;">quotient[15:0]</div>
<div class="t " style="left:517px;top:508px;font-size:13px;color:#000;font-weight:normal;">-32767</div>
<svg class="s" style="left:306px;top:511px" width="16" height="16"><polygon points="1.5,2.5 5.5,2.5 7,5 8.5,2.5 12.5,2.5 12.5,9.5 1.5,9.5" fill="#a7cce0" stroke="#8a9aa4" stroke-width="1"/><circle cx="7" cy="9.5" r="3.3" fill="#d4d4d4"/><circle cx="7" cy="9.5" r="1.2" fill="#777"/></svg>
<div class="r" style="left:306px;top:531px;width:107px;height:25px;background:#cadcf8;"></div>
<div class="r" style="left:514px;top:531px;width:145px;height:25px;background:#cadcf8;"></div>
<svg class="s" style="left:293px;top:537px" width="8" height="12"><path d="M2,1.5 L6,6 L2,10.5" fill="none" stroke="#bbb" stroke-width="1.2"/></svg>
<div class="t " style="left:323px;top:533px;font-size:13px;color:#000;font-weight:normal;">remainder[15:0]</div>
<div class="t " style="left:517px;top:533px;font-size:13px;color:#000;font-weight:normal;">0</div>
<svg class="s" style="left:306px;top:536px" width="16" height="16"><polygon points="1.5,2.5 5.5,2.5 7,5 8.5,2.5 12.5,2.5 12.5,9.5 1.5,9.5" fill="#a7cce0" stroke="#8a9aa4" stroke-width="1"/><circle cx="7" cy="9.5" r="3.3" fill="#d4d4d4"/><circle cx="7" cy="9.5" r="1.2" fill="#777"/></svg>
<div class="r" style="left:514px;top:281px;width:145px;height:25px;background:transparent;border:1px solid #5b9be6"></div>
<svg class="s" style="left:667px;top:200px;overflow:hidden" width="1405" height="1023" viewBox="667 200 1405 1023" shape-rendering="crispEdges"><line x1="670" y1="1183.5" x2="2069" y2="1183.5" stroke="#d0d0d0" stroke-width="1"/><line x1="670" y1="256.5" x2="2070" y2="256.5" stroke="#fff" stroke-width="1"/><line x1="670.5" y1="240" x2="670.5" y2="256" stroke="#fff" stroke-width="1"/><text x="672.0" y="241.5" font-family="Liberation Sans" font-size="11.5" fill="#fff" textLength="47" lengthAdjust="spacingAndGlyphs">0.000 ns</text><line x1="693.5" y1="252" x2="693.5" y2="256" stroke="#fff" stroke-width="1"/><line x1="716.5" y1="252" x2="716.5" y2="256" stroke="#fff" stroke-width="1"/><line x1="739.5" y1="252" x2="739.5" y2="256" stroke="#fff" stroke-width="1"/><line x1="763.5" y1="252" x2="763.5" y2="256" stroke="#fff" stroke-width="1"/><line x1="786.5" y1="240" x2="786.5" y2="256" stroke="#fff" stroke-width="1"/><text x="788.0" y="241.5" font-family="Liberation Sans" font-size="11.5" fill="#fff" textLength="53" lengthAdjust="spacingAndGlyphs">50.000 ns</text><line x1="809.5" y1="252" x2="809.5" y2="256" stroke="#fff" stroke-width="1"/><line x1="833.5" y1="252" x2="833.5" y2="256" stroke="#fff" stroke-width="1"/><line x1="856.5" y1="252" x2="856.5" y2="256" stroke="#fff" stroke-width="1"/><line x1="879.5" y1="252" x2="879.5" y2="256" stroke="#fff" stroke-width="1"/><line x1="903.5" y1="240" x2="903.5" y2="256" stroke="#fff" stroke-width="1"/><text x="905.0" y="241.5" font-family="Liberation Sans" font-size="11.5" fill="#fff" textLength="59" lengthAdjust="spacingAndGlyphs">100.000 ns</text><line x1="926.5" y1="252" x2="926.5" y2="256" stroke="#fff" stroke-width="1"/><line x1="949.5" y1="252" x2="949.5" y2="256" stroke="#fff" stroke-width="1"/><line x1="973.5" y1="252" x2="973.5" y2="256" stroke="#fff" stroke-width="1"/><line x1="996.5" y1="252" x2="996.5" y2="256" stroke="#fff" stroke-width="1"/><line x1="1019.5" y1="240" x2="1019.5" y2="256" stroke="#fff" stroke-width="1"/><text x="1021.0" y="241.5" font-family="Liberation Sans" font-size="11.5" fill="#fff" textLength="59" lengthAdjust="spacingAndGlyphs">150.000 ns</text><line x1="1043.5" y1="252" x2="1043.5" y2="256" stroke="#fff" stroke-width="1"/><line x1="1066.5" y1="252" x2="1066.5" y2="256" stroke="#fff" stroke-width="1"/><line x1="1089.5" y1="252" x2="1089.5" y2="256" stroke="#fff" stroke-width="1"/><line x1="1113.5" y1="252" x2="1113.5" y2="256" stroke="#fff" stroke-width="1"/><line x1="1136.5" y1="240" x2="1136.5" y2="256" stroke="#fff" stroke-width="1"/><text x="1138.0" y="241.5" font-family="Liberation Sans" font-size="11.5" fill="#fff" textLength="59" lengthAdjust="spacingAndGlyphs">200.000 ns</text><line x1="1159.5" y1="252" x2="1159.5" y2="256" stroke="#fff" stroke-width="1"/><line x1="1182.5" y1="252" x2="1182.5" y2="256" stroke="#fff" stroke-width="1"/><line x1="1206.5" y1="252" x2="1206.5" y2="256" stroke="#fff" stroke-width="1"/><line x1="1229.5" y1="252" x2="1229.5" y2="256" stroke="#fff" stroke-width="1"/><line x1="1252.5" y1="240" x2="1252.5" y2="256" stroke="#fff" stroke-width="1"/><text x="1254.0" y="241.5" font-family="Liberation Sans" font-size="11.5" fill="#fff" textLength="59" lengthAdjust="spacingAndGlyphs">250.000 ns</text><line x1="1276.5" y1="252" x2="1276.5" y2="256" stroke="#fff" stroke-width="1"/><line x1="1299.5" y1="252" x2="1299.5" y2="256" stroke="#fff" stroke-width="1"/><line x1="1322.5" y1="252" x2="1322.5" y2="256" stroke="#fff" stroke-width="1"/><line x1="1346.5" y1="252" x2="1346.5" y2="256" stroke="#fff" stroke-width="1"/><line x1="1369.5" y1="240" x2="1369.5" y2="256" stroke="#fff" stroke-width="1"/><text x="1371.0" y="241.5" font-family="Liberation Sans" font-size="11.5" fill="#fff" textLength="59" lengthAdjust="spacingAndGlyphs">300.000 ns</text><line x1="1392.5" y1="252" x2="1392.5" y2="256" stroke="#fff" stroke-width="1"/><line x1="1416.5" y1="252" x2="1416.5" y2="256" stroke="#fff" stroke-width="1"/><line x1="1439.5" y1="252" x2="1439.5" y2="256" stroke="#fff" stroke-width="1"/><line x1="1462.5" y1="252" x2="1462.5" y2="256" stroke="#fff" stroke-width="1"/><line x1="1486.5" y1="240" x2="1486.5" y2="256" stroke="#fff" stroke-width="1"/><text x="1488.0" y="241.5" font-family="Liberation Sans" font-size="11.5" fill="#fff" textLength="59" lengthAdjust="spacingAndGlyphs">350.000 ns</text><line x1="1509.5" y1="252" x2="1509.5" y2="256" stroke="#fff" stroke-width="1"/><line x1="1532.5" y1="252" x2="1532.5" y2="256" stroke="#fff" stroke-width="1"/><line x1="1556.5" y1="252" x2="1556.5" y2="256" stroke="#fff" stroke-width="1"/><line x1="1579.5" y1="252" x2="1579.5" y2="256" stroke="#fff" stroke-width="1"/><line x1="1602.5" y1="240" x2="1602.5" y2="256" stroke="#fff" stroke-width="1"/><text x="1604.0" y="241.5" font-family="Liberation Sans" font-size="11.5" fill="#fff" textLength="59" lengthAdjust="spacingAndGlyphs">400.000 ns</text><line x1="1625.5" y1="252" x2="1625.5" y2="256" stroke="#fff" stroke-width="1"/><line x1="1649.5" y1="252" x2="1649.5" y2="256" stroke="#fff" stroke-width="1"/><line x1="1672.5" y1="252" x2="1672.5" y2="256" stroke="#fff" stroke-width="1"/><line x1="1695.5" y1="252" x2="1695.5" y2="256" stroke="#fff" stroke-width="1"/><line x1="1719.5" y1="240" x2="1719.5" y2="256" stroke="#fff" stroke-width="1"/><text x="1721.0" y="241.5" font-family="Liberation Sans" font-size="11.5" fill="#fff" textLength="59" lengthAdjust="spacingAndGlyphs">450.000 ns</text><line x1="1742.5" y1="252" x2="1742.5" y2="256" stroke="#fff" stroke-width="1"/><line x1="1765.5" y1="252" x2="1765.5" y2="256" stroke="#fff" stroke-width="1"/><line x1="1789.5" y1="252" x2="1789.5" y2="256" stroke="#fff" stroke-width="1"/><line x1="1812.5" y1="252" x2="1812.5" y2="256" stroke="#fff" stroke-width="1"/><line x1="1835.5" y1="240" x2="1835.5" y2="256" stroke="#fff" stroke-width="1"/><text x="1837.0" y="241.5" font-family="Liberation Sans" font-size="11.5" fill="#fff" textLength="59" lengthAdjust="spacingAndGlyphs">500.000 ns</text><line x1="1859.5" y1="252" x2="1859.5" y2="256" stroke="#fff" stroke-width="1"/><line x1="1882.5" y1="252" x2="1882.5" y2="256" stroke="#fff" stroke-width="1"/><line x1="1905.5" y1="252" x2="1905.5" y2="256" stroke="#fff" stroke-width="1"/><line x1="1929.5" y1="252" x2="1929.5" y2="256" stroke="#fff" stroke-width="1"/><line x1="1952.5" y1="240" x2="1952.5" y2="256" stroke="#fff" stroke-width="1"/><text x="1954.0" y="241.5" font-family="Liberation Sans" font-size="11.5" fill="#fff" textLength="59" lengthAdjust="spacingAndGlyphs">550.000 ns</text><line x1="1975.5" y1="252" x2="1975.5" y2="256" stroke="#fff" stroke-width="1"/><line x1="1999.5" y1="252" x2="1999.5" y2="256" stroke="#fff" stroke-width="1"/><line x1="2022.5" y1="252" x2="2022.5" y2="256" stroke="#fff" stroke-width="1"/><line x1="2045.5" y1="252" x2="2045.5" y2="256" stroke="#fff" stroke-width="1"/><line x1="2068.5" y1="240" x2="2068.5" y2="256" stroke="#fff" stroke-width="1"/><text x="2070.0" y="241.5" font-family="Liberation Sans" font-size="11.5" fill="#fff" textLength="59" lengthAdjust="spacingAndGlyphs">600.000 ns</text><rect x="681.5" y="261" width="12.0" height="18" fill="#004a00"/><rect x="704.5" y="261" width="12.0" height="18" fill="#004a00"/><rect x="728.5" y="261" width="11.0" height="18" fill="#004a00"/><rect x="751.5" y="261" width="12.0" height="18" fill="#004a00"/><rect x="774.5" y="261" width="12.0" height="18" fill="#004a00"/><rect x="798.5" y="261" width="11.0" height="18" fill="#004a00"/><rect x="821.5" y="261" width="12.0" height="18" fill="#004a00"/><rect x="844.5" y="261" width="12.0" height="18" fill="#004a00"/><rect x="868.5" y="261" width="11.0" height="18" fill="#004a00"/><rect x="891.5" y="261" width="12.0" height="18" fill="#004a00"/><rect x="914.5" y="261" width="12.0" height="18" fill="#004a00"/><rect x="938.5" y="261" width="11.0" height="18" fill="#004a00"/><rect x="961.5" y="261" width="12.0" height="18" fill="#004a00"/><rect x="984.5" y="261" width="12.0" height="18" fill="#004a00"/><rect x="1008.5" y="261" width="11.0" height="18" fill="#004a00"/><rect x="1031.5" y="261" width="12.0" height="18" fill="#004a00"/><rect x="1054.5" y="261" width="12.0" height="18" fill="#004a00"/><rect x="1078.5" y="261" width="11.0" height="18" fill="#004a00"/><rect x="1101.5" y="261" width="12.0" height="18" fill="#004a00"/><rect x="1124.5" y="261" width="12.0" height="18" fill="#004a00"/><rect x="1147.5" y="261" width="12.0" height="18" fill="#004a00"/><rect x="1171.5" y="261" width="11.0" height="18" fill="#004a00"/><rect x="1194.5" y="261" width="12.0" height="18" fill="#004a00"/><rect x="1217.5" y="261" width="12.0" height="18" fill="#004a00"/><rect x="1241.5" y="261" width="11.0" height="18" fill="#004a00"/><rect x="1264.5" y="261" width="12.0" height="18" fill="#004a00"/><rect x="1287.5" y="261" width="12.0" height="18" fill="#004a00"/><rect x="1311.5" y="261" width="11.0" height="18" fill="#004a00"/><rect x="1334.5" y="261" width="12.0" height="18" fill="#004a00"/><rect x="1357.5" y="261" width="12.0" height="18" fill="#004a00"/><rect x="1381.5" y="261" width="11.0" height="18" fill="#004a00"/><rect x="1404.5" y="261" width="12.0" height="18" fill="#004a00"/><rect x="1427.5" y="261" width="12.0" height="18" fill="#004a00"/><rect x="1451.5" y="261" width="11.0" height="18" fill="#004a00"/><rect x="1474.5" y="261" width="12.0" height="18" fill="#004a00"/><rect x="1497.5" y="261" width="12.0" height="18" fill="#004a00"/><rect x="1521.5" y="261" width="11.0" height="18" fill="#004a00"/><rect x="1544.5" y="261" width="12.0" height="18" fill="#004a00"/><rect x="1567.5" y="261" width="12.0" height="18" fill="#004a00"/><rect x="1590.5" y="261" width="12.0" height="18" fill="#004a00"/><rect x="1614.5" y="261" width="11.0" height="18" fill="#004a00"/><rect x="1637.5" y="261" width="12.0" height="18" fill="#004a00"/><rect x="1660.5" y="261" width="12.0" height="18" fill="#004a00"/><rect x="1684.5" y="261" width="11.0" height="18" fill="#004a00"/><rect x="1707.5" y="261" width="12.0" height="18" fill="#004a00"/><rect x="1730.5" y="261" width="12.0" height="18" fill="#004a00"/><rect x="1754.5" y="261" width="11.0" height="18" fill="#004a00"/><rect x="1777.5" y="261" width="12.0" height="18" fill="#004a00"/><rect x="1800.5" y="261" width="12.0" height="18" fill="#004a00"/><rect x="1824.5" y="261" width="11.0" height="18" fill="#004a00"/><rect x="1847.5" y="261" width="12.0" height="18" fill="#004a00"/><rect x="1870.5" y="261" width="12.0" height="18" fill="#004a00"/><rect x="1894.5" y="261" width="11.0" height="18" fill="#004a00"/><rect x="1917.5" y="261" width="12.0" height="18" fill="#004a00"/><rect x="1940.5" y="261" width="12.0" height="18" fill="#004a00"/><rect x="1964.5" y="261" width="11.0" height="18" fill="#004a00"/><rect x="1987.5" y="261" width="12.0" height="18" fill="#004a00"/><rect x="2010.5" y="261" width="12.0" height="18" fill="#004a00"/><rect x="2033.5" y="261" width="12.0" height="18" fill="#004a00"/><rect x="2057.5" y="261" width="10.0" height="18" fill="#004a00"/><rect x="670.5" y="361" width="1397.0" height="18" fill="#004a00"/><rect x="670.5" y="411" width="1397.0" height="18" fill="#004a00"/><rect x="1124.5" y="461" width="943.0" height="18" fill="#004a00"/><line x1="670.5" y1="257" x2="670.5" y2="1183" stroke="#b8b8b8" stroke-width="1"/><line x1="786.5" y1="257" x2="786.5" y2="1183" stroke="#b8b8b8" stroke-width="1"/><line x1="903.5" y1="257" x2="903.5" y2="1183" stroke="#b8b8b8" stroke-width="1"/><line x1="1019.5" y1="257" x2="1019.5" y2="1183" stroke="#b8b8b8" stroke-width="1"/><line x1="1136.5" y1="257" x2="1136.5" y2="1183" stroke="#b8b8b8" stroke-width="1"/><line x1="1252.5" y1="257" x2="1252.5" y2="1183" stroke="#b8b8b8" stroke-width="1"/><line x1="1369.5" y1="257" x2="1369.5" y2="1183" stroke="#b8b8b8" stroke-width="1"/><line x1="1486.5" y1="257" x2="1486.5" y2="1183" stroke="#b8b8b8" stroke-width="1"/><line x1="1602.5" y1="257" x2="1602.5" y2="1183" stroke="#b8b8b8" stroke-width="1"/><line x1="1719.5" y1="257" x2="1719.5" y2="1183" stroke="#b8b8b8" stroke-width="1"/><line x1="1835.5" y1="257" x2="1835.5" y2="1183" stroke="#b8b8b8" stroke-width="1"/><line x1="1952.5" y1="257" x2="1952.5" y2="1183" stroke="#b8b8b8" stroke-width="1"/><line x1="2068.5" y1="257" x2="2068.5" y2="1183" stroke="#b8b8b8" stroke-width="1"/><path d="M670,279.5 H681.5 V260.5 H693.5 V279.5 H704.5 V260.5 H716.5 V279.5 H728.5 V260.5 H739.5 V279.5 H751.5 V260.5 H763.5 V279.5 H774.5 V260.5 H786.5 V279.5 H798.5 V260.5 H809.5 V279.5 H821.5 V260.5 H833.5 V279.5 H844.5 V260.5 H856.5 V279.5 H868.5 V260.5 H879.5 V279.5 H891.5 V260.5 H903.5 V279.5 H914.5 V260.5 H926.5 V279.5 H938.5 V260.5 H949.5 V279.5 H961.5 V260.5 H973.5 V279.5 H984.5 V260.5 H996.5 V279.5 H1008.5 V260.5 H1019.5 V279.5 H1031.5 V260.5 H1043.5 V279.5 H1054.5 V260.5 H1066.5 V279.5 H1078.5 V260.5 H1089.5 V279.5 H1101.5 V260.5 H1113.5 V279.5 H1124.5 V260.5 H1136.5 V279.5 H1147.5 V260.5 H1159.5 V279.5 H1171.5 V260.5 H1182.5 V279.5 H1194.5 V260.5 H1206.5 V279.5 H1217.5 V260.5 H1229.5 V279.5 H1241.5 V260.5 H1252.5 V279.5 H1264.5 V260.5 H1276.5 V279.5 H1287.5 V260.5 H1299.5 V279.5 H1311.5 V260.5 H1322.5 V279.5 H1334.5 V260.5 H1346.5 V279.5 H1357.5 V260.5 H1369.5 V279.5 H1381.5 V260.5 H1392.5 V279.5 H1404.5 V260.5 H1416.5 V279.5 H1427.5 V260.5 H1439.5 V279.5 H1451.5 V260.5 H1462.5 V279.5 H1474.5 V260.5 H1486.5 V279.5 H1497.5 V260.5 H1509.5 V279.5 H1521.5 V260.5 H1532.5 V279.5 H1544.5 V260.5 H1556.5 V279.5 H1567.5 V260.5 H1579.5 V279.5 H1590.5 V260.5 H1602.5 V279.5 H1614.5 V260.5 H1625.5 V279.5 H1637.5 V260.5 H1649.5 V279.5 H1660.5 V260.5 H1672.5 V279.5 H1684.5 V260.5 H1695.5 V279.5 H1707.5 V260.5 H1719.5 V279.5 H1730.5 V260.5 H1742.5 V279.5 H1754.5 V260.5 H1765.5 V279.5 H1777.5 V260.5 H1789.5 V279.5 H1800.5 V260.5 H1812.5 V279.5 H1824.5 V260.5 H1835.5 V279.5 H1847.5 V260.5 H1859.5 V279.5 H1870.5 V260.5 H1882.5 V279.5 H1894.5 V260.5 H1905.5 V279.5 H1917.5 V260.5 H1929.5 V279.5 H1940.5 V260.5 H1952.5 V279.5 H1964.5 V260.5 H1975.5 V279.5 H1987.5 V260.5 H1999.5 V279.5 H2010.5 V260.5 H2022.5 V279.5 H2033.5 V260.5 H2045.5 V279.5 H2057.5 V260.5 H2067.5 V279.5 H2067.5" fill="none" stroke="#00ff00" stroke-width="1"/><polygon points="670.5,294.5 674.0,285 1366.0,285 1369.5,294.5 1366.0,304 674.0,304" fill="#000" stroke="#00ff00" stroke-width="2" stroke-linejoin="miter" shape-rendering="auto"/><text x="1005.5" y="296.0" font-family="Liberation Sans" font-size="11.5" fill="#fff" textLength="29" lengthAdjust="spacingAndGlyphs" shape-rendering="auto">32767</text><polygon points="1369.5,294.5 1373.0,285 2064.0,285 2067.5,294.5 2064.0,304 1373.0,304" fill="#000" stroke="#00ff00" stroke-width="2" stroke-linejoin="miter" shape-rendering="auto"/><text x="1701.0" y="296.0" font-family="Liberation Sans" font-size="11.5" fill="#fff" textLength="35" lengthAdjust="spacingAndGlyphs" shape-rendering="auto">-32767</text><polygon points="670.5,320.0 674.0,310.5 1366.0,310.5 1369.5,320.0 1366.0,329.5 674.0,329.5" fill="#000" stroke="#00ff00" stroke-width="1" stroke-linejoin="miter" shape-rendering="auto"/><text x="1005.5" y="321.5" font-family="Liberation Sans" font-size="11.5" fill="#fff" textLength="29" lengthAdjust="spacingAndGlyphs" shape-rendering="auto">65535</text><polygon points="1369.5,320.0 1373.0,310.5 2064.0,310.5 2067.5,320.0 2064.0,329.5 1373.0,329.5" fill="#000" stroke="#00ff00" stroke-width="1" stroke-linejoin="miter" shape-rendering="auto"/><text x="1716.0" y="321.5" font-family="Liberation Sans" font-size="11.5" fill="#fff" textLength="5" lengthAdjust="spacingAndGlyphs" shape-rendering="auto">1</text><polygon points="670.5,344.5 674.0,335 678.0,335 681.5,344.5 678.0,354 674.0,354" fill="#000" stroke="#00ff00" stroke-width="2" stroke-linejoin="miter" shape-rendering="auto"/><polygon points="681.5,344.5 685.0,335 1378.0,335 1381.5,344.5 1378.0,354 685.0,354" fill="#000" stroke="#00ff00" stroke-width="2" stroke-linejoin="miter" shape-rendering="auto"/><text x="1002.0" y="346.0" font-family="Liberation Sans" font-size="11.5" fill="#fff" textLength="59" lengthAdjust="spacingAndGlyphs" shape-rendering="auto">2147385345</text><polygon points="1381.5,344.5 1385.0,335 2064.0,335 2067.5,344.5 2064.0,354 1385.0,354" fill="#000" stroke="#00ff00" stroke-width="2" stroke-linejoin="miter" shape-rendering="auto"/><text x="1707.0" y="346.0" font-family="Liberation Sans" font-size="11.5" fill="#fff" textLength="35" lengthAdjust="spacingAndGlyphs" shape-rendering="auto">-32767</text><line x1="670.5" y1="379.5" x2="2067.5" y2="379.5" stroke="#0a8a0a" stroke-width="1"/><line x1="670.5" y1="360.5" x2="2067.5" y2="360.5" stroke="#00ff00" stroke-width="1.6"/><polygon points="670.5,394.5 674.0,385 1366.0,385 1369.5,394.5 1366.0,404 674.0,404" fill="#000" stroke="#00ff00" stroke-width="2" stroke-linejoin="miter" shape-rendering="auto"/><text x="1005.5" y="396.0" font-family="Liberation Sans" font-size="11.5" fill="#fff" textLength="29" lengthAdjust="spacingAndGlyphs" shape-rendering="auto">32767</text><polygon points="1369.5,394.5 1373.0,385 2064.0,385 2067.5,394.5 2064.0,404 1373.0,404" fill="#000" stroke="#00ff00" stroke-width="2" stroke-linejoin="miter" shape-rendering="auto"/><text x="1701.0" y="396.0" font-family="Liberation Sans" font-size="11.5" fill="#fff" textLength="35" lengthAdjust="spacingAndGlyphs" shape-rendering="auto">-32767</text><line x1="670.5" y1="429.5" x2="2067.5" y2="429.5" stroke="#0a8a0a" stroke-width="1"/><line x1="670.5" y1="410.5" x2="2067.5" y2="410.5" stroke="#00ff00" stroke-width="1.6"/><polygon points="670.5,444.5 674.0,435 2064.0,435 2067.5,444.5 2064.0,454 674.0,454" fill="#000" stroke="#00ff00" stroke-width="2" stroke-linejoin="miter" shape-rendering="auto"/><text x="1363.5" y="446.0" font-family="Liberation Sans" font-size="11.5" fill="#fff" textLength="11" lengthAdjust="spacingAndGlyphs" shape-rendering="auto">-1</text><line x1="1124.5" y1="479.5" x2="2067.5" y2="479.5" stroke="#0a8a0a" stroke-width="1"/><path d="M670,479.5 H1124.5 V460.5 H2067.5" fill="none" stroke="#00ff00" stroke-width="1"/><polygon points="670.5,494.5 674.0,485 1121.0,485 1124.5,494.5 1121.0,504 674.0,504" fill="#000" stroke="#00ff00" stroke-width="2" stroke-linejoin="miter" shape-rendering="auto"/><text x="895.0" y="496.0" font-family="Liberation Sans" font-size="11.5" fill="#fff" textLength="5" lengthAdjust="spacingAndGlyphs" shape-rendering="auto">0</text><polygon points="1124.5,494.5 1128.0,485 1821.0,485 1824.5,494.5 1821.0,504 1128.0,504" fill="#000" stroke="#00ff00" stroke-width="2" stroke-linejoin="miter" shape-rendering="auto"/><text x="1442.0" y="496.0" font-family="Liberation Sans" font-size="11.5" fill="#fff" textLength="65" lengthAdjust="spacingAndGlyphs" shape-rendering="auto">-2147418112</text><polygon points="1824.5,494.5 1828.0,485 2064.0,485 2067.5,494.5 2064.0,504 1828.0,504" fill="#000" stroke="#00ff00" stroke-width="2" stroke-linejoin="miter" shape-rendering="auto"/><text x="1916.5" y="496.0" font-family="Liberation Sans" font-size="11.5" fill="#fff" textLength="59" lengthAdjust="spacingAndGlyphs" shape-rendering="auto">2147418112</text><polygon points="670.5,519.5 674.0,510 1121.0,510 1124.5,519.5 1121.0,529 674.0,529" fill="#000" stroke="#00ff00" stroke-width="2" stroke-linejoin="miter" shape-rendering="auto"/><text x="895.0" y="521.0" font-family="Liberation Sans" font-size="11.5" fill="#fff" textLength="5" lengthAdjust="spacingAndGlyphs" shape-rendering="auto">0</text><polygon points="1124.5,519.5 1128.0,510 1821.0,510 1824.5,519.5 1821.0,529 1128.0,529" fill="#000" stroke="#00ff00" stroke-width="2" stroke-linejoin="miter" shape-rendering="auto"/><text x="1457.0" y="521.0" font-family="Liberation Sans" font-size="11.5" fill="#fff" textLength="35" lengthAdjust="spacingAndGlyphs" shape-rendering="auto">-32767</text><polygon points="1824.5,519.5 1828.0,510 2064.0,510 2067.5,519.5 2064.0,529 1828.0,529" fill="#000" stroke="#00ff00" stroke-width="2" stroke-linejoin="miter" shape-rendering="auto"/><text x="1931.5" y="521.0" font-family="Liberation Sans" font-size="11.5" fill="#fff" textLength="29" lengthAdjust="spacingAndGlyphs" shape-rendering="auto">32767</text><polygon points="670.5,544.5 674.0,535 2064.0,535 2067.5,544.5 2064.0,554 674.0,554" fill="#000" stroke="#00ff00" stroke-width="2" stroke-linejoin="miter" shape-rendering="auto"/><text x="1366.5" y="546.0" font-family="Liberation Sans" font-size="11.5" fill="#fff" textLength="5" lengthAdjust="spacingAndGlyphs" shape-rendering="auto">0</text><rect x="1147" y="200" width="2" height="983" fill="#ffff00"/><rect x="1147" y="200" width="65" height="16" fill="#ffff00"/><text x="1149" y="210.5" font-family="Liberation Mono" font-size="11.5" fill="#000" textLength="59" lengthAdjust="spacingAndGlyphs" shape-rendering="auto">205.004 ns</text></svg>
<div class="r" style="left:348px;top:536px;width:284px;height:864px;background:#f6f6f6;"></div>
<div class="r" style="left:349px;top:537px;width:282px;height:862px;background:#cdcdcd;"></div>
<div class="r" style="left:350px;top:538px;width:280px;height:860px;background:#a9a9a9;"></div>
<div class="r" style="left:351px;top:539px;width:278px;height:858px;background:#fff;"></div>
<div class="r" style="left:382px;top:544px;width:1px;height:760px;background:#e2e2e2;"></div>
<div class="r" style="left:385px;top:705px;width:245px;height:1px;background:#e0e0e0;"></div>
<div class="r" style="left:385px;top:818px;width:245px;height:1px;background:#e0e0e0;"></div>
<div class="r" style="left:385px;top:985px;width:245px;height:1px;background:#e0e0e0;"></div>
<div class="r" style="left:385px;top:1124px;width:245px;height:1px;background:#e0e0e0;"></div>
<div class="r" style="left:385px;top:1211px;width:245px;height:1px;background:#e0e0e0;"></div>
<div class="r" style="left:351px;top:1128px;width:274px;height:27px;background:#cadcf8;"></div>
<div class="t " style="left:394px;top:544px;font-size:13px;color:#a0a0a0;font-weight:normal;">Go To Source Code</div>
<div class="t " style="left:394px;top:571px;font-size:13px;color:#a0a0a0;font-weight:normal;">Show in Object Window</div>
<div class="t " style="left:394px;top:598px;font-size:13px;color:#a0a0a0;font-weight:normal;"><u>R</u>eport Drivers</div>
<div class="t " style="left:394px;top:625px;font-size:13px;color:#a0a0a0;font-weight:normal;"><u>F</u>orce Constant...</div>
<div class="t " style="left:394px;top:652px;font-size:13px;color:#a0a0a0;font-weight:normal;">For<u>c</u>e Clock...</div>
<div class="t " style="left:394px;top:679px;font-size:13px;color:#000;font-weight:normal;"><u>R</u>emove Force</div>
<div class="t " style="left:394px;top:711px;font-size:13px;color:#000;font-weight:normal;">Cu<u>t</u></div>
<div class="t " style="left:555px;top:711px;font-size:13px;color:#a0a0a0;font-weight:normal;">Ctrl+X</div>
<div class="t " style="left:394px;top:738px;font-size:13px;color:#000;font-weight:normal;"><u>C</u>opy</div>
<div class="t " style="left:555px;top:738px;font-size:13px;color:#a0a0a0;font-weight:normal;">Ctrl+C</div>
<div class="t " style="left:394px;top:765px;font-size:13px;color:#a0a0a0;font-weight:normal;"><u>P</u>aste</div>
<div class="t " style="left:555px;top:765px;font-size:13px;color:#a0a0a0;font-weight:normal;">Ctrl+V</div>
<div class="t " style="left:394px;top:792px;font-size:13px;color:#000;font-weight:normal;"><u>D</u>elete</div>
<div class="t " style="left:555px;top:792px;font-size:13px;color:#a0a0a0;font-weight:normal;">Delete</div>
<div class="t " style="left:394px;top:824px;font-size:13px;color:#000;font-weight:normal;"><u>F</u>ind...</div>
<div class="t " style="left:555px;top:824px;font-size:13px;color:#a0a0a0;font-weight:normal;">Ctrl+F</div>
<div class="t " style="left:394px;top:851px;font-size:13px;color:#000;font-weight:normal;">Find <u>V</u>alue...</div>
<div class="t " style="left:555px;top:851px;font-size:13px;color:#a0a0a0;font-weight:normal;">Ctrl+Shift+F</div>
<div class="t " style="left:394px;top:878px;font-size:13px;color:#000;font-weight:normal;">Select <u>A</u>ll</div>
<div class="t " style="left:555px;top:878px;font-size:13px;color:#a0a0a0;font-weight:normal;">Ctrl+A</div>
<div class="t " style="left:394px;top:905px;font-size:13px;color:#000;font-weight:normal;"><u>E</u>xpand</div>
<div class="t " style="left:394px;top:932px;font-size:13px;color:#a0a0a0;font-weight:normal;"><u>C</u>ollapse</div>
<div class="t " style="left:394px;top:959px;font-size:13px;color:#a0a0a0;font-weight:normal;"><u>U</u>ngroup</div>
<div class="t " style="left:394px;top:991px;font-size:13px;color:#a0a0a0;font-weight:normal;">Re<u>n</u>ame</div>
<div class="t " style="left:555px;top:991px;font-size:13px;color:#a0a0a0;font-weight:normal;">F2</div>
<div class="t " style="left:394px;top:1018px;font-size:13px;color:#000;font-weight:normal;">Name</div>
<svg class="s" style="left:611px;top:1022px" width="8" height="10"><polygon points="1,1 6,5 1,9" fill="#888"/></svg>
<div class="t " style="left:394px;top:1045px;font-size:13px;color:#000;font-weight:normal;">Waveform Style</div>
<svg class="s" style="left:611px;top:1049px" width="8" height="10"><polygon points="1,1 6,5 1,9" fill="#888"/></svg>
<div class="t " style="left:394px;top:1072px;font-size:13px;color:#000;font-weight:normal;">Signal Color</div>
<svg class="s" style="left:611px;top:1076px" width="8" height="10"><polygon points="1,1 6,5 1,9" fill="#888"/></svg>
<div class="t " style="left:394px;top:1099px;font-size:13px;color:#a0a0a0;font-weight:normal;">Divider Color</div>
<svg class="s" style="left:611px;top:1103px" width="8" height="10"><polygon points="1,1 6,5 1,9" fill="#c0c0c0"/></svg>
<div class="t " style="left:394px;top:1131px;font-size:13px;color:#000;font-weight:normal;">Radix</div>
<svg class="s" style="left:611px;top:1135px" width="8" height="10"><polygon points="1,1 6,5 1,9" fill="#888"/></svg>
<div class="t " style="left:394px;top:1158px;font-size:13px;color:#a0a0a0;font-weight:normal;">Show as <u>E</u>numeration</div>
<div class="t " style="left:394px;top:1185px;font-size:13px;color:#000;font-weight:normal;">Reverse <u>B</u>it Order</div>
<div class="t " style="left:394px;top:1217px;font-size:13px;color:#000;font-weight:normal;">New Gr<u>o</u>up</div>
<div class="t " style="left:394px;top:1244px;font-size:13px;color:#000;font-weight:normal;">New D<u>i</u>vider</div>
<div class="t " style="left:394px;top:1271px;font-size:13px;color:#000;font-weight:normal;">New <u>V</u>irtual Bus</div>
<svg class="s" style="left:362px;top:1219px" width="16" height="16"><path d="M1,1h2M1,1v2M13,1h-2M13,1v2M1,13h2M1,13v-2M13,13h-2M13,13v-2" stroke="#333" stroke-width="1"/><rect x="3.5" y="3.5" width="6" height="6" fill="#a7cce0" stroke="#6a8aa0"/><rect x="5.5" y="5.5" width="6" height="6" fill="#a7cce0" stroke="#6a8aa0"/></svg>
<svg class="s" style="left:362px;top:1273px" width="16" height="16"><polygon points="1.5,2.5 5.5,2.5 7,5 8.5,2.5 12.5,2.5 12.5,9.5 1.5,9.5" fill="#a7cce0" stroke="#8a9aa4" stroke-width="1"/><circle cx="7" cy="9.5" r="3.3" fill="#f39a2b"/><circle cx="7" cy="9.5" r="1.2" fill="#fff"/></svg>
<div class="r" style="left:626px;top:860px;width:159px;height:295px;background:#f6f6f6;"></div>
<div class="r" style="left:627px;top:861px;width:157px;height:293px;background:#cdcdcd;"></div>
<div class="r" style="left:628px;top:862px;width:155px;height:291px;background:#a9a9a9;"></div>
<div class="r" style="left:629px;top:863px;width:153px;height:289px;background:#fff;"></div>
<div class="r" style="left:663px;top:865px;width:1px;height:284px;background:#e2e2e2;"></div>
<div class="r" style="left:629px;top:1037px;width:153px;height:27px;background:#cadcf8;"></div>
<div class="r" style="left:664px;top:894px;width:118px;height:1px;background:#e0e0e0;"></div>
<div class="r" style="left:664px;top:1007px;width:118px;height:1px;background:#e0e0e0;"></div>
<div class="r" style="left:664px;top:1093px;width:118px;height:1px;background:#e0e0e0;"></div>
<div class="t " style="left:671px;top:868px;font-size:13px;color:#000;font-weight:normal;"><u>D</u>efault</div>
<div class="t " style="left:671px;top:900px;font-size:13px;color:#000;font-weight:normal;"><u>B</u>inary</div>
<div class="t " style="left:671px;top:927px;font-size:13px;color:#000;font-weight:normal;"><u>H</u>exadecimal</div>
<div class="t " style="left:671px;top:954px;font-size:13px;color:#000;font-weight:normal;"><u>O</u>ctal</div>
<div class="t " style="left:671px;top:981px;font-size:13px;color:#000;font-weight:normal;"><u>A</u>SCII</div>
<div class="t " style="left:671px;top:1013px;font-size:13px;color:#000;font-weight:normal;"><u>U</u>nsigned Decimal</div>
<div class="t " style="left:671px;top:1040px;font-size:13px;color:#000;font-weight:normal;"><u>S</u>igned Decimal</div>
<div class="t " style="left:671px;top:1067px;font-size:13px;color:#000;font-weight:normal;">Signed <u>M</u>agnitude</div>
<div class="t " style="left:671px;top:1099px;font-size:13px;color:#a0a0a0;font-weight:normal;">Rea<u>l</u></div>
<div class="t " style="left:671px;top:1126px;font-size:13px;color:#000;font-weight:normal;">Real Se<u>t</u>tings...</div>
<svg class="s" style="left:640px;top:1042px" width="14" height="14"><path d="M2,7 L5.5,10.5 L12,3" fill="none" stroke="#fff" stroke-width="2.4"/></svg>
<div class="r" style="left:286px;top:249px;width:147px;height:322px;background:transparent;border:2px solid #ee1c1c"></div>
<div class="r" style="left:351px;top:1125px;width:122px;height:34px;background:transparent;border:2px solid #ee1c1c"></div>
<div class="r" style="left:636px;top:1033px;width:136px;height:33px;background:transparent;border:2px solid #ee1c1c"></div>
</body></html>
